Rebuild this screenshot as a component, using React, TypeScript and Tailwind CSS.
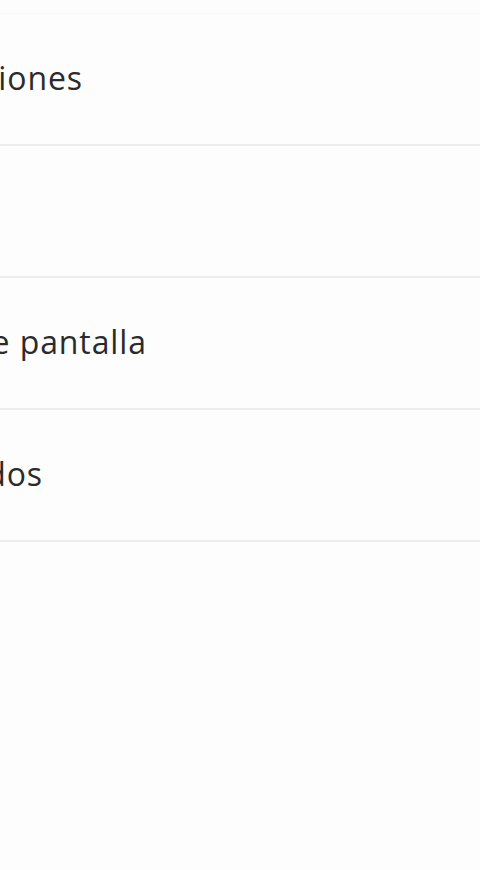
const rows = [
  { label: 'Notificaciones', end: 'w-[83px]' },
  { label: '', end: 'w-[0px]' },
  { label: 'Bloqueo de pantalla', end: 'w-[147px]' },
  { label: 'Contactos bloqueados', end: 'w-[43px]' },
];

export default function App() {
  return (
    <div className="min-h-[870px] w-[480px] bg-[#fdfdfd] pt-[13px] font-['Open_Sans',sans-serif] text-[#2b2b2b] overflow-hidden">
      <ul className="border-t border-[#f7f7f7]">
        {rows.map((row, i) => (
          <li key={i} className="h-[132px] flex items-center border-b-2 border-[#ededed]">
            <div className={`${row.end} flex justify-end overflow-hidden whitespace-nowrap text-[32px] tracking-[0.9px] leading-none pb-[3px]`}>
              {row.label}
            </div>
          </li>
        ))}
      </ul>
    </div>
  );
}
